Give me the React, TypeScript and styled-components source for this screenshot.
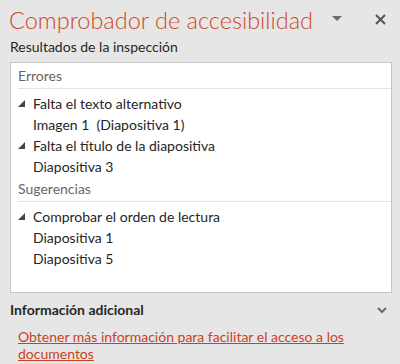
import styled, { createGlobalStyle } from "styled-components";

const GlobalStyle = createGlobalStyle`
  html, body {
    margin: 0;
    padding: 0;
    background: #e6e6e6;
  }
  body {
    font-family: Lato, "Open Sans", sans-serif;
    color: #262626;
  }
`;

type Issue = { title: string; items: string[] };
type Group = { name: string; issues: Issue[] };

const GROUPS: Group[] = [
  {
    name: "Errores",
    issues: [
      { title: "Falta el texto alternativo", items: ["Imagen 1  (Diapositiva 1)"] },
      { title: "Falta el título de la diapositiva", items: ["Diapositiva 3"] },
    ],
  },
  {
    name: "Sugerencias",
    issues: [
      { title: "Comprobar el orden de lectura", items: ["Diapositiva 1", "Diapositiva 5"] },
    ],
  },
];

function App() {
  return (
    <Pane>
      <GlobalStyle />
      <Header>
        <Title>Comprobador de accesibilidad</Title>
        <HeaderIcons>
          <svg width="10" height="6" viewBox="0 0 10 6">
            <path d="M0 0 H10 L5 5 Z" fill="#6b6b6b" />
          </svg>
          <svg width="11" height="11" viewBox="0 0 11 11">
            <path d="M1 1 L10 10 M10 1 L1 10" stroke="#555" strokeWidth="2" />
          </svg>
        </HeaderIcons>
      </Header>
      <SubTitle>Resultados de la inspección</SubTitle>
      <Results>
        {GROUPS.map((g, i) => (
          <div key={g.name}>
            <GroupName $first={i === 0}>{g.name}</GroupName>
            {g.issues.map((issue) => (
              <div key={issue.title}>
                <Row>
                  <Caret viewBox="0 0 7 7">
                    <path d="M7 0 V7 H0 Z" fill="#444" />
                  </Caret>
                  {issue.title}
                </Row>
                {issue.items.map((it) => (
                  <Row key={it} $child>
                    {it}
                  </Row>
                ))}
              </div>
            ))}
          </div>
        ))}
      </Results>
      <MoreHeader>
        <span>Información adicional</span>
        <svg width="10" height="7" viewBox="0 0 10 7">
          <path d="M1 1 L5 5 L9 1" stroke="#6b6b6b" strokeWidth="2" fill="none" />
        </svg>
      </MoreHeader>
      <MoreLink href="#">Obtener más información para facilitar el acceso a los documentos</MoreLink>
    </Pane>
  );
}

export default App;

// Style
const Pane = styled.div`
  width: 400px;
  height: 364px;
  box-sizing: border-box;
  padding: 0 8px 0 10px;
  overflow: hidden;
`;

const Header = styled.div`
  display: flex;
  align-items: center;
  justify-content: space-between;
  height: 38px;
  padding-top: 2px;
  box-sizing: border-box;
`;

const Title = styled.div`
  font-size: 23.5px;
  font-weight: 300;
  color: #d24726;
  margin-left: -1px;
  white-space: nowrap;
`;

const HeaderIcons = styled.div`
  flex: none;
  display: flex;
  align-items: center;
  gap: 33px;
  padding-right: 6px;
  margin-top: -2px;
`;

const SubTitle = styled.div`
  font-size: 14px;
  line-height: 18px;
  margin-bottom: 6px;
`;

const Results = styled.div`
  height: 231px;
  box-sizing: border-box;
  background: #fff;
  border: 1px solid #c6c6c6;
  padding: 3px 0 0 7px;
`;

const GroupName = styled.div<{ $first?: boolean }>`
  font-size: 14px;
  color: #666;
  line-height: 20px;
  padding-bottom: 2px;
  border-bottom: 1px solid #e3e3e3;
  margin-bottom: 4px;
  margin-top: ${(p) => (p.$first ? "0" : "2px")};
`;

const Row = styled.div<{ $child?: boolean }>`
  display: flex;
  align-items: center;
  font-size: 14px;
  line-height: 21px;
  white-space: pre;
  padding-left: ${(p) => (p.$child ? "15px" : "0")};
`;

const Caret = styled.svg`
  width: 7px;
  height: 7px;
  margin: 0 8px 0 0;
`;

const MoreHeader = styled.div`
  display: flex;
  align-items: center;
  justify-content: space-between;
  font-size: 14px;
  font-weight: bold;
  padding: 7px 5px 0 0;
  line-height: 20px;
`;

const MoreLink = styled.a`
  display: block;
  margin: 8px 0 0 8px;
  font-size: 14px;
  line-height: 17px;
  color: #c8431f;
  text-decoration: underline;
  width: 340px;
`;
